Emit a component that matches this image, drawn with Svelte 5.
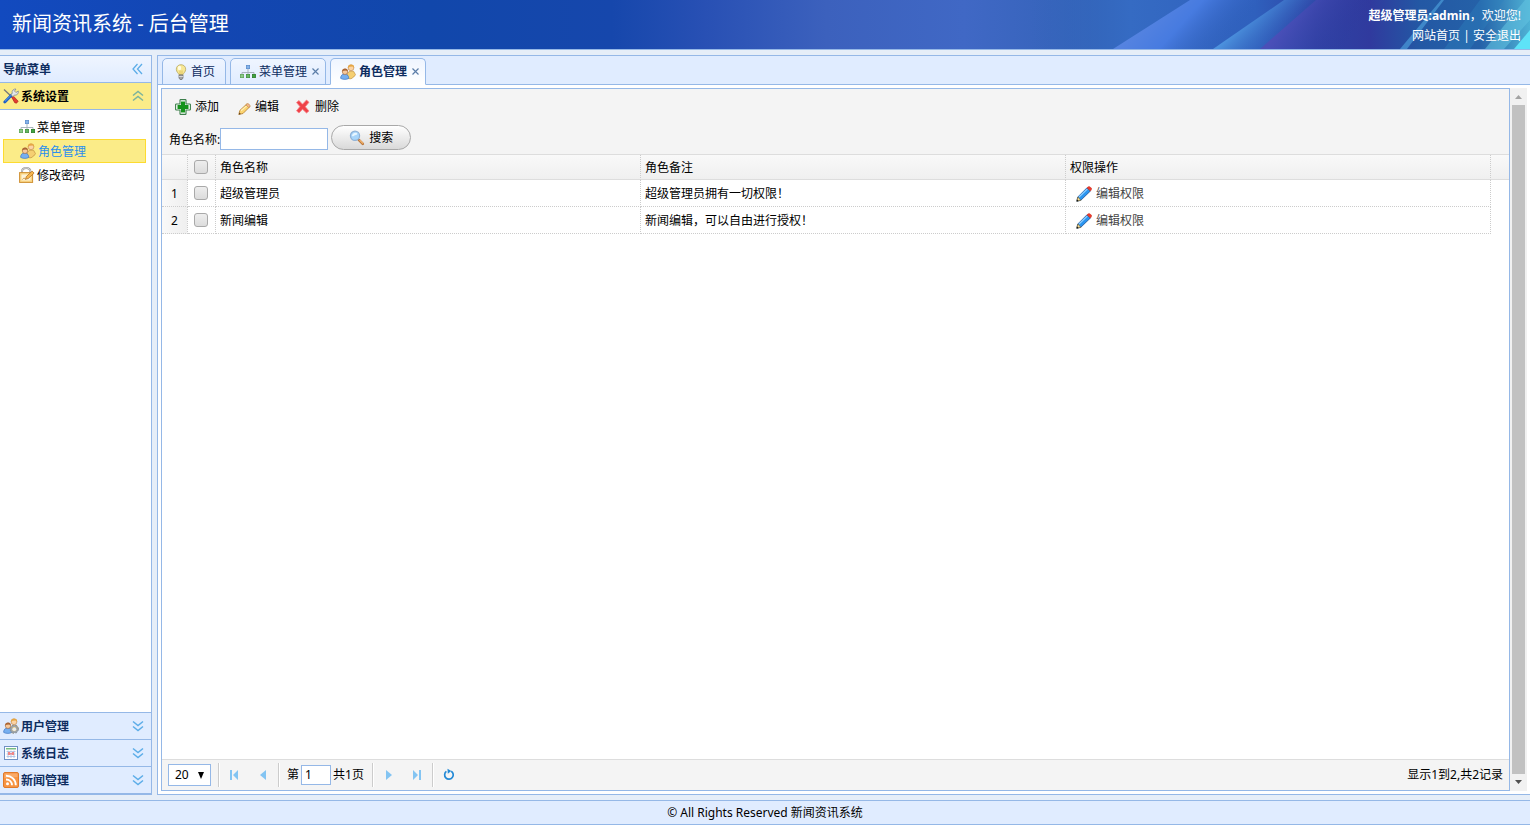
<script lang="ts">
  let filter = $state("");
  let pageSize = $state("20");
  let page = $state("1");

  const openMenu = [
    { icon: "tree", text: "菜单管理" },
    { icon: "role", text: "角色管理", selected: true },
    { icon: "password", text: "修改密码" },
  ];
  const closedMenus = [
    { icon: "user", text: "用户管理" },
    { icon: "log", text: "系统日志" },
    { icon: "rss", text: "新闻管理" },
  ];
  const tabs = [
    { icon: "bulb", text: "首页", closable: false },
    { icon: "tree", text: "菜单管理", closable: true },
    { icon: "role", text: "角色管理", closable: true, selected: true },
  ];
  const actions = [
    { icon: "add", text: "添加" },
    { icon: "edit", text: "编辑" },
    { icon: "remove", text: "删除" },
  ];
  const roles = [
    { name: "超级管理员", remark: "超级管理员拥有一切权限！" },
    { name: "新闻编辑", remark: "新闻编辑，可以自由进行授权！" },
  ];
</script>

{#snippet people()}
  <path d="M7 14.500l.5-5 2-2.300h4l2 3.500-1.800 2.300-2.700 1.800z" fill="#f5cf72" stroke="#c2913d" stroke-width=".7" />
  <circle cx="11" cy="3.800" r="2.900" fill="#fbd3a4" stroke="#bd854d" stroke-width=".6" />
  <path d="M7.900 4.300C7.600 1.500 9 .4 11 .4s3.500 1.100 3.100 3.500L12.500 2.600 9.500 2.700z" fill="#e5a644" />
  <path d="M.6 14.300c.2-2.800 1.500-4.200 3.900-4.200s4.200 1.400 4.300 4.200c-1.500 1.500-6.500 1.500-8.200 0z" fill="#76aff0" stroke="#3f78c4" stroke-width=".7" />
  <circle cx="5" cy="7.800" r="2.700" fill="#f7c99c" stroke="#a2663a" stroke-width=".6" />
  <path d="M2.200 7.800C2 5.500 3.200 4.500 5.100 4.500S8 5.600 7.700 7.800L6.300 6.600 3.500 6.700z" fill="#ab6533" />
{/snippet}

{#snippet icon(name: string)}
  <svg class="icon" width="16" height="16" viewBox="0 0 16 16" aria-hidden="true">
    {#if name === "tree"}
      <path d="M8 5v6M2 11V8.500h12V11" fill="none" stroke="#a3adb8" stroke-width=".9" />
      <rect x="6.400" y="1.400" width="3.200" height="3.200" fill="#86b4ea" stroke="#5d8fce" stroke-width=".8" />
      <rect x=".4" y="10.400" width="3.200" height="3.200" fill="#8ccb86" stroke="#5fa65a" stroke-width=".8" />
      <rect x="6.400" y="10.400" width="3.200" height="3.200" fill="#64b85f" stroke="#44913f" stroke-width=".8" />
      <rect x="12.400" y="10.400" width="3.200" height="3.200" fill="#3fa43d" stroke="#2b7d2a" stroke-width=".8" />
    {:else if name === "role"}
      {@render people()}
    {:else if name === "user"}
      {@render people()}
      <circle cx="11.300" cy="11.200" r="3" fill="none" stroke="#9ca3a9" stroke-width="1.800" />
      <circle cx="11.300" cy="11.200" r="4.100" fill="none" stroke="#838b92" stroke-width="1" stroke-dasharray="1.600 1.700" />
      <circle cx="11.300" cy="11.200" r="1.800" fill="#e9ecef" />
    {:else if name === "password"}
      <path d="M3 6.500V4.500C3 2 5 1 7.200 1s4.200 1 4.200 3.500v2" fill="none" stroke="#9b9b9b" stroke-width="2" />
      <path d="M3 6.500V4.500C3 2 5 1 7.200 1s4.200 1 4.200 3.500v2" fill="none" stroke="#dedede" stroke-width=".9" />
      <rect x=".6" y="5.600" width="13" height="9.800" fill="#fad686" stroke="#cf8f32" />
      <rect x="2.500" y="7.500" width="9" height="6" fill="#fdf3d8" />
      <path d="M3.500 12.500c1-1.500 2-2 3 0" fill="none" stroke="#c98a2b" stroke-width=".9" />
      <path d="M6.500 12.300l.8-2.700 5.800-5.500 2 2-5.800 5.400z" fill="#f8b64d" stroke="#a96b21" stroke-width=".7" />
    {:else if name === "tools"}
      <path d="M1 1.500l8.500 8" stroke="#777" stroke-width="1.300" />
      <path d="M8.700 9.200l1.800-1 4.700 5-1.700 2-1.800-.5z" fill="#e23c31" stroke="#a1180f" stroke-width=".6" />
      <path d="M1.800 13.900L8.700 7" stroke="#1c5fc4" stroke-width="2.800" stroke-linecap="round" />
      <path d="M2 13.300L7.800 7.600" stroke="#6aa5f3" stroke-width=".9" />
      <path d="M8 6.800l1.200-1.500C8.500 2.800 10.500.7 13 1l-1.500 2 1.400 1.500L15.300 3c.6 2.600-1.500 4.700-4 4.100L10 8.700z" fill="#e3e6e9" stroke="#858b91" stroke-width=".8" />
    {:else if name === "log"}
      <rect x="1.500" y="1.500" width="13" height="13" fill="#fff" stroke="#6f91c4" />
      <path d="M3 3.800h10" stroke="#57ad62" stroke-width="1.200" />
      <path d="M3.500 6.500h9M3.500 9h9M3.500 11.500h9M5 5.500v7.500M8 5.500v7.500M11 5.500v7.500" stroke="#a9bde0" stroke-width=".8" />
      <path d="M5 7h2v3H5zm4 0h2v3H9zM7 8h2v1.500H7z" fill="#f18585" />
    {:else if name === "rss"}
      <rect x=".5" y=".5" width="15" height="15" rx="1.500" fill="#f79443" stroke="#e07a2a" />
      <path d="M1.500 6V1.500h13V5z" fill="#fbb377" opacity=".7" />
      <circle cx="4.500" cy="11.800" r="1.500" fill="#fff" />
      <path d="M3 7.500c3.500 0 6 2.300 6 5.800M3 3.700c5.500 0 9.800 4 9.800 9.600" fill="none" stroke="#fff" stroke-width="1.900" />
    {:else if name === "bulb"}
      <path d="M5.800 10.500C5.500 9 3.300 8 3.300 5.200 3.300 2.500 5.400.7 8 .7s4.700 1.800 4.700 4.500C12.700 8 10.500 9 10.200 10.500z" fill="#f7e795" stroke="#b9a962" stroke-width=".8" />
      <ellipse cx="6.500" cy="4" rx="1.700" ry="2.200" fill="#fffbe0" />
      <path d="M7 10V6.500M9 10V6.500" stroke="#d8b749" stroke-width=".7" />
      <path d="M6 11h4v3l-1 1.500H7L6 14z" fill="#a4a4a4" stroke="#6b6b6b" stroke-width=".7" />
      <path d="M6 12.500h4" stroke="#e4e4e4" stroke-width=".8" />
    {:else if name === "add"}
      <path d="M5.500.6h5l.5.500V5h3.900l.5.500v5l-.5.500H11v3.900l-.5.500h-5l-.5-.5V11H1.100L.6 10.500v-5L1.100 5H5V1.100z" fill="#fff" stroke="#3c7e4a" stroke-width="1.100" />
      <path d="M6 2.500h4V6h3.500v4H10v3.500H6V10H2.500V6H6z" fill="#15931b" />
    {:else if name === "edit"}
      <g transform="translate(3 2)">
        <path d="M.8 13.500l1-4L9 2.800l3 2.700-7 7z" fill="#fbd470" stroke="#b27a2c" stroke-width=".8" />
        <path d="M3 9.800l6.500-5.700" stroke="#fff0b8" stroke-width="1.200" />
        <path d="M9 2.800c1-.9 3.800 1.500 3 2.700l-1.200 1-3-2.600z" fill="#f3b690" stroke="#b27a2c" stroke-width=".5" />
        <path d="M.8 13.500l.6-2 1.400 1.500z" fill="#553a18" />
      </g>
    {:else if name === "remove"}
      <path d="M1.500 3.500L4 1.500l3.500 3.700L11.500 1 14 3.300l-3.700 4.400L14 12l-2.500 2-4-3.800L4 14l-2.500-2.200 3.400-4.200z" fill="#ef4148" stroke="#f7868a" stroke-width=".8" />
    {:else if name === "search"}
      <path d="M9.800 9.800l4 4" stroke="#b9753a" stroke-width="2.600" stroke-linecap="round" />
      <path d="M10.500 10l3.500 3.500" stroke="#f3b36b" stroke-width="1.200" />
      <circle cx="6" cy="5.800" r="4.600" fill="#a8d5fa" stroke="#8fb1d6" stroke-width="1.200" />
      <path d="M3 6c0-2 1.500-3.300 3.500-3.300S9 4.500 7 5 4 7 3 6z" fill="#e8f6ff" />
    {:else if name === "pencil"}
      <path d="M.8 15.200l1-4.200L11 1.800l3.400 3.200-9.600 9.300z" fill="#2b95f0" stroke="#174a8f" stroke-width=".8" />
      <path d="M3 11l8.300-8" stroke="#8ccdff" stroke-width="1.300" />
      <path d="M11 1.800l1-1h2l1.400 1.400v1.600l-1 1.200z" fill="#ee3b2c" stroke="#c52a1d" stroke-width=".5" />
      <path d="M.8 15.200l1-4.200 3 3.300z" fill="#fbdf9a" stroke="#6d5520" stroke-width=".6" />
      <path d="M.6 15.400l.5-2 1.600 1.500z" fill="#111" />
    {:else if name === "first"}
      <path d="M3 3h2v10H3zM11 3v10L6 8z" fill="#83c4f2" />
    {:else if name === "prev"}
      <path d="M11 3v10L5 8z" fill="#83c4f2" />
    {:else if name === "next"}
      <path d="M5 3v10l6-5z" fill="#83c4f2" />
    {:else if name === "last"}
      <path d="M10 3h2v10h-2zM4 3v10l5-5z" fill="#83c4f2" />
    {:else if name === "refresh"}
      <path d="M10.200 4.200a4.300 4.300 0 1 1-4.800.2" fill="none" stroke="#2289d6" stroke-width="1.700" />
      <path d="M6.500 1.800l3.800 2.200-3.500 2.800z" fill="#2289d6" />
    {:else if name === "left"}
      <path d="M7.500 3L3 8l4.500 5M12 3L7.500 8l4.500 5" fill="none" stroke="#5cade8" stroke-width="1.300" />
    {:else if name === "up"}
      <path d="M3 7.500L8 3.500l5 4M3 12.500L8 8.500l5 4" fill="none" stroke="#7bb39d" stroke-width="1.500" />
    {:else if name === "down"}
      <path d="M3 3.500L8 7.500l5-4M3 8.500L8 12.500l5-4" fill="none" stroke="#5cade8" stroke-width="1.500" />
    {/if}
  </svg>
{/snippet}

<div class="layout">
  <header class="north">
    <svg class="north-bg" viewBox="0 0 500 49" width="500" height="49" aria-hidden="true">
      <defs>
        <linearGradient id="base">
          <stop offset="0" stop-color="#3264b8" stop-opacity="0" />
          <stop offset=".2" stop-color="#356bc3" />
          <stop offset=".45" stop-color="#2f60bd" />
          <stop offset=".57" stop-color="#2d44a5" />
          <stop offset=".68" stop-color="#303a9e" />
          <stop offset=".78" stop-color="#2358a4" />
          <stop offset=".9" stop-color="#2561a8" />
          <stop offset="1" stop-color="#4fb2d5" />
        </linearGradient>
        <linearGradient id="beam" gradientUnits="userSpaceOnUse" x1="115" y1="20" x2="170" y2="70">
          <stop offset="0" stop-color="#5583e0" />
          <stop offset=".4" stop-color="#477be0" />
          <stop offset="1" stop-color="#3260be" stop-opacity="0" />
        </linearGradient>
        <linearGradient id="sky" gradientUnits="userSpaceOnUse" x1="215" y1="20" x2="245" y2="50">
          <stop offset="0" stop-color="#4c92de" />
          <stop offset="1" stop-color="#3562bd" stop-opacity="0" />
        </linearGradient>
        <linearGradient id="violet" gradientUnits="userSpaceOnUse" x1="255" y1="20" x2="310" y2="55">
          <stop offset="0" stop-color="#4a4fb8" />
          <stop offset="1" stop-color="#30359c" stop-opacity="0" />
        </linearGradient>
      </defs>
      <rect width="500" height="49" fill="url(#base)" />
      <path d="M83 49L160 0h110l-80 49z" fill="url(#beam)" />
      <path d="M183 49L254 0h60l-66 49z" fill="url(#sky)" />
      <path d="M230 49L286 0h90l-50 49z" fill="url(#violet)" />
      <path d="M370 49L411 0h3l-37 49z" fill="#4a9bd8" opacity=".7" />
      <path d="M414 49L450 0h24l-34 49z" fill="#2e83bd" opacity=".4" />
      <path d="M455 49L495 0h5v20l-26 29z" fill="#61c1e0" opacity=".6" />
      <path d="M484 49l16-19v19z" fill="#5ee3f8" />
    </svg>
    <h1>新闻资讯系统 - 后台管理</h1>
    <div class="account">
      <div><strong>超级管理员:admin</strong>，欢迎您!</div>
      <div><a href="#home">网站首页</a> | <a href="#logout">安全退出</a></div>
    </div>
  </header>

  <aside class="west">
    <div class="panel-title">
      <span>导航菜单</span>
      <button class="tool" aria-label="折叠">{@render icon("left")}</button>
    </div>
    <button class="accordion open">
      {@render icon("tools")}<span>系统设置</span>{@render icon("up")}
    </button>
    <nav class="menu">
      {#each openMenu as item}
        <a href="#menu" class:selected={item.selected}>{@render icon(item.icon)}<span>{item.text}</span></a>
      {/each}
    </nav>
    {#each closedMenus as item}
      <button class="accordion">
        {@render icon(item.icon)}<span>{item.text}</span>{@render icon("down")}
      </button>
    {/each}
  </aside>

  <main class="center">
    <div class="tabs">
      {#each tabs as tab}
        <div class="tab" class:selected={tab.selected} class:closable={tab.closable}>
          <button class="tab-name">{@render icon(tab.icon)}{tab.text}</button>
          {#if tab.closable}
            <button class="tab-close" aria-label="关闭">
              <svg width="7" height="7" viewBox="0 0 7 7"><path d="M.5.5l6 6M6.500.5l-6 6" stroke="#5b7da8" stroke-width="1.200" /></svg>
            </button>
          {/if}
        </div>
      {/each}
    </div>

    <div class="tab-body">
      <div class="datagrid">
        <div class="toolbar">
          <div class="actions">
            {#each actions as action}
              <button>{@render icon(action.icon)}{action.text}</button>
            {/each}
          </div>
          <form class="query" onsubmit={(e) => e.preventDefault()}>
            <label for="role-name">角色名称:</label>
            <input id="role-name" type="text" bind:value={filter} />
            <button>{@render icon("search")}搜索</button>
          </form>
        </div>

        <div class="rows">
          <table>
            <colgroup>
              <col class="col-number" />
              <col class="col-check" />
              <col />
              <col />
              <col />
              <col class="col-rest" />
            </colgroup>
            <thead>
              <tr>
                <th></th>
                <th class="check"><input type="checkbox" aria-label="全选" /></th>
                <th>角色名称</th>
                <th>角色备注</th>
                <th>权限操作</th>
                <th class="rest"></th>
              </tr>
            </thead>
            <tbody>
              {#each roles as role, i}
                <tr>
                  <td class="number">{i + 1}</td>
                  <td class="check"><input type="checkbox" aria-label={role.name} /></td>
                  <td>{role.name}</td>
                  <td>{role.remark}</td>
                  <td><a class="grant" href="#grant">{@render icon("pencil")}编辑权限</a></td>
                  <td class="rest"></td>
                </tr>
              {/each}
            </tbody>
          </table>
        </div>

        <div class="pager">
          <select bind:value={pageSize} aria-label="每页条数">
            <option>10</option>
            <option>20</option>
            <option>50</option>
          </select>
          <i class="separator"></i>
          <button aria-label="第一页">{@render icon("first")}</button>
          <button aria-label="上一页">{@render icon("prev")}</button>
          <i class="separator"></i>
          <label class="page-number">第<input type="text" bind:value={page} />共1页</label>
          <i class="separator"></i>
          <button aria-label="下一页">{@render icon("next")}</button>
          <button aria-label="最后一页">{@render icon("last")}</button>
          <i class="separator"></i>
          <button aria-label="刷新">{@render icon("refresh")}</button>
          <span class="summary">显示1到2,共2记录</span>
        </div>
      </div>

      <div class="scrollbar" aria-hidden="true">
        <svg width="17" height="17" viewBox="0 0 17 17"><path d="M5 11h7L8.500 7z" fill="#a3a3a3" /></svg>
        <div class="thumb"></div>
        <svg width="17" height="17" viewBox="0 0 17 17"><path d="M5 6h7l-3.500 4z" fill="#505050" /></svg>
      </div>
    </div>
  </main>

  <footer class="south">© All Rights Reserved 新闻资讯系统</footer>
</div>

<style>
  :global(body) {
    margin: 0;
  }

  .layout,
  .layout * {
    box-sizing: border-box;
  }

  .layout {
    display: grid;
    grid-template: 50px minmax(0, 1fr) 25px / 152px minmax(0, 1fr);
    gap: 5px;
    height: 100vh;
    background: #e6eef8;
    color: #000;
    font: 12px/20px "Noto Sans", "Noto Sans CJK SC", sans-serif;
  }

  button,
  input,
  select {
    margin: 0;
    padding: 0;
    border: 0;
    background: none;
    color: inherit;
    font: inherit;
  }

  button {
    cursor: pointer;
  }

  a {
    color: inherit;
    text-decoration: none;
  }

  .icon {
    flex: none;
    display: block;
  }

  /* Header */
  .north {
    grid-column: 1 / -1;
    position: relative;
    display: flex;
    justify-content: space-between;
    overflow: hidden;
    border-bottom: 1px solid #95b8e7;
    background: linear-gradient(90deg, #124abf 0%, #1346b2 14%, #1147ab 28%, #1647ac 40%, #2850b4 46%, #3c61bd 54%, #4068c5 63%, #3262b7 72%, #3567bd 100%);
    color: #fff;
  }

  .north-bg {
    position: absolute;
    top: 0;
    right: 0;
  }

  h1 {
    margin: 0;
    padding: 9px 12px;
    font-size: 20px;
    line-height: 30px;
    font-weight: 400;
  }

  .account {
    position: relative;
    padding: 6px 9px;
    text-align: right;
  }

  /* Navigation */
  .west {
    display: flex;
    flex-direction: column;
    border: solid #95b8e7;
    border-width: 1px 1px 1px 0;
    background: #fff;
  }

  .panel-title {
    display: flex;
    align-items: center;
    justify-content: space-between;
    height: 27px;
    padding: 0 5px 0 3px;
    border-bottom: 1px solid #95b8e7;
    background: linear-gradient(#eff5ff, #e0ecff);
    color: #0e2d5f;
    font-weight: 700;
  }

  .panel-title span,
  .accordion span,
  .menu span {
    padding-top: 2px;
  }

  .accordion {
    display: flex;
    align-items: center;
    gap: 2px;
    height: 27px;
    padding: 0 5px 0 3px;
    border-top: 1px solid #95b8e7;
    background: #e0ecff;
    color: #0e2d5f;
    font-weight: 700;
    text-align: left;
  }

  .accordion:last-child {
    height: 28px;
    border-bottom: 1px solid #95b8e7;
  }

  .accordion span {
    flex: 1;
  }

  .accordion.open {
    border-top: 0;
    border-bottom: 1px solid #95b8e7;
    background: #fbec88;
    color: #000;
  }

  .menu {
    flex: 1;
    padding: 5px 5px 0 3px;
  }

  .menu a {
    display: flex;
    align-items: center;
    gap: 2px;
    height: 24px;
    padding-left: 16px;
  }

  .menu a.selected {
    border: 1px solid #fddb30;
    background: #fbec88;
    color: #2a8fee;
  }

  /* Tabs */
  .center {
    display: flex;
    flex-direction: column;
    border: solid #95b8e7;
    border-width: 1px 0 1px 1px;
    background: #fff;
  }

  .tabs {
    display: flex;
    align-items: flex-end;
    gap: 4px;
    height: 29px;
    padding-left: 4px;
    background: linear-gradient(#e0ecff 28px, #95b8e7 28px);
  }

  .tab {
    display: flex;
    align-items: center;
    height: 27px;
    padding: 0 10px;
    border: 1px solid #95b8e7;
    border-radius: 5px 5px 0 0;
    background: linear-gradient(#eff5ff, #e0ecff);
    color: #0e2d5f;
  }

  .tab.closable {
    padding: 0 6px 0 9px;
  }

  .tab.selected {
    border-bottom-color: #fff;
    background: linear-gradient(#eff5ff, #fff);
    font-weight: 700;
  }

  .tab-name {
    display: flex;
    align-items: center;
    gap: 2px;
  }

  .closable .tab-name {
    gap: 3px;
  }

  .tab-close {
    padding-left: 5px;
    line-height: 0;
  }

  .tab-body {
    flex: 1;
    display: flex;
    min-height: 0;
    padding: 3px;
  }

  /* Grid */
  .datagrid {
    flex: 1;
    display: flex;
    flex-direction: column;
    min-width: 0;
    border: 1px solid #95b8e7;
  }

  .toolbar {
    height: 66px;
    padding: 8px 7px 4px;
    border-bottom: 1px solid #ddd;
    background: #f4f4f4;
  }

  .actions {
    display: flex;
    gap: 16px;
    height: 28px;
    padding-left: 6px;
    align-items: flex-start;
  }

  .actions button {
    display: flex;
    align-items: center;
    gap: 4px;
  }

  .query {
    display: flex;
    align-items: flex-end;
    height: 25px;
  }

  .query input {
    width: 108px;
    height: 22px;
    margin-right: 3px;
    padding: 0 3px;
    border: 1px solid #95b8e7;
    background: #fff;
  }

  .query button {
    display: flex;
    align-items: center;
    justify-content: center;
    gap: 4px;
    width: 80px;
    height: 25px;
    border: 1px solid #a8a8a8;
    border-radius: 13px;
    background: linear-gradient(#fff, #d9d9d9);
  }

  .rows {
    flex: 1;
    min-height: 0;
    overflow: hidden;
  }

  table {
    width: 100%;
    table-layout: fixed;
    border-collapse: separate;
    border-spacing: 0;
  }

  .col-number {
    width: 26px;
  }

  .col-check {
    width: 28px;
  }

  .col-rest {
    width: 18px;
  }

  thead tr {
    background: linear-gradient(#f9f9f9, #efefef);
  }

  th,
  td {
    padding: 2px 4px 0;
    border-right: 1px dotted #ccc;
    text-align: left;
    font-weight: 400;
  }

  th {
    height: 25px;
    border-bottom: 1px solid #ddd;
  }

  td {
    height: 27px;
    border-bottom: 1px dotted #ccc;
  }

  .number {
    padding: 2px 0 0;
    background: linear-gradient(90deg, #f9f9f9, #efefef);
    text-align: center;
  }

  .check {
    padding: 0 6px;
  }

  .check input {
    appearance: none;
    display: block;
    width: 14px;
    height: 14px;
    border: 1px solid #a9a9a9;
    border-radius: 3px;
    background: linear-gradient(#eee, #dcdcdc);
  }

  .rest {
    border-right: 0;
  }

  td.rest {
    border-bottom: 0;
  }

  .grant {
    display: flex;
    align-items: center;
    gap: 4px;
    padding-left: 6px;
    color: #444;
  }

  /* Pager */
  .pager {
    display: flex;
    align-items: center;
    height: 31px;
    padding: 0 6px;
    border-top: 1px solid #ddd;
    background: #f4f4f4;
  }

  .pager select {
    appearance: none;
    width: 43px;
    height: 22px;
    margin-right: 6px;
    padding: 0 6px;
    border: 1px solid #95b8e7;
    background: #fff url("data:image/svg+xml,%3Csvg xmlns='http://www.w3.org/2000/svg' width='6' height='7'%3E%3Cpath d='M0 0h6L3 7z'/%3E%3C/svg%3E") no-repeat right 6px center;
  }

  .separator {
    width: 2px;
    height: 24px;
    margin: 0 1px;
    border-left: 1px solid #ccc;
    border-right: 1px solid #fff;
  }

  .pager button {
    display: flex;
    align-items: center;
    justify-content: center;
    width: 28px;
    height: 24px;
  }

  .page-number {
    display: flex;
    align-items: center;
    padding: 0 7px 0 6px;
  }

  .page-number input {
    width: 30px;
    height: 20px;
    margin: 0 2px;
    padding: 0 3px;
    border: 1px solid #95b8e7;
    background: #fff;
  }

  .summary {
    margin-left: auto;
  }

  .scrollbar {
    display: flex;
    flex-direction: column;
    width: 17px;
    background: #f1f1f1;
  }

  .thumb {
    flex: 1;
    margin: 0 2px;
    background: #c1c1c1;
  }

  /* Footer */
  .south {
    grid-column: 1 / -1;
    padding-top: 1px;
    border: solid #95b8e7;
    border-width: 1px 0;
    background: #e0ecff;
    line-height: 22px;
    text-align: center;
  }
</style>
